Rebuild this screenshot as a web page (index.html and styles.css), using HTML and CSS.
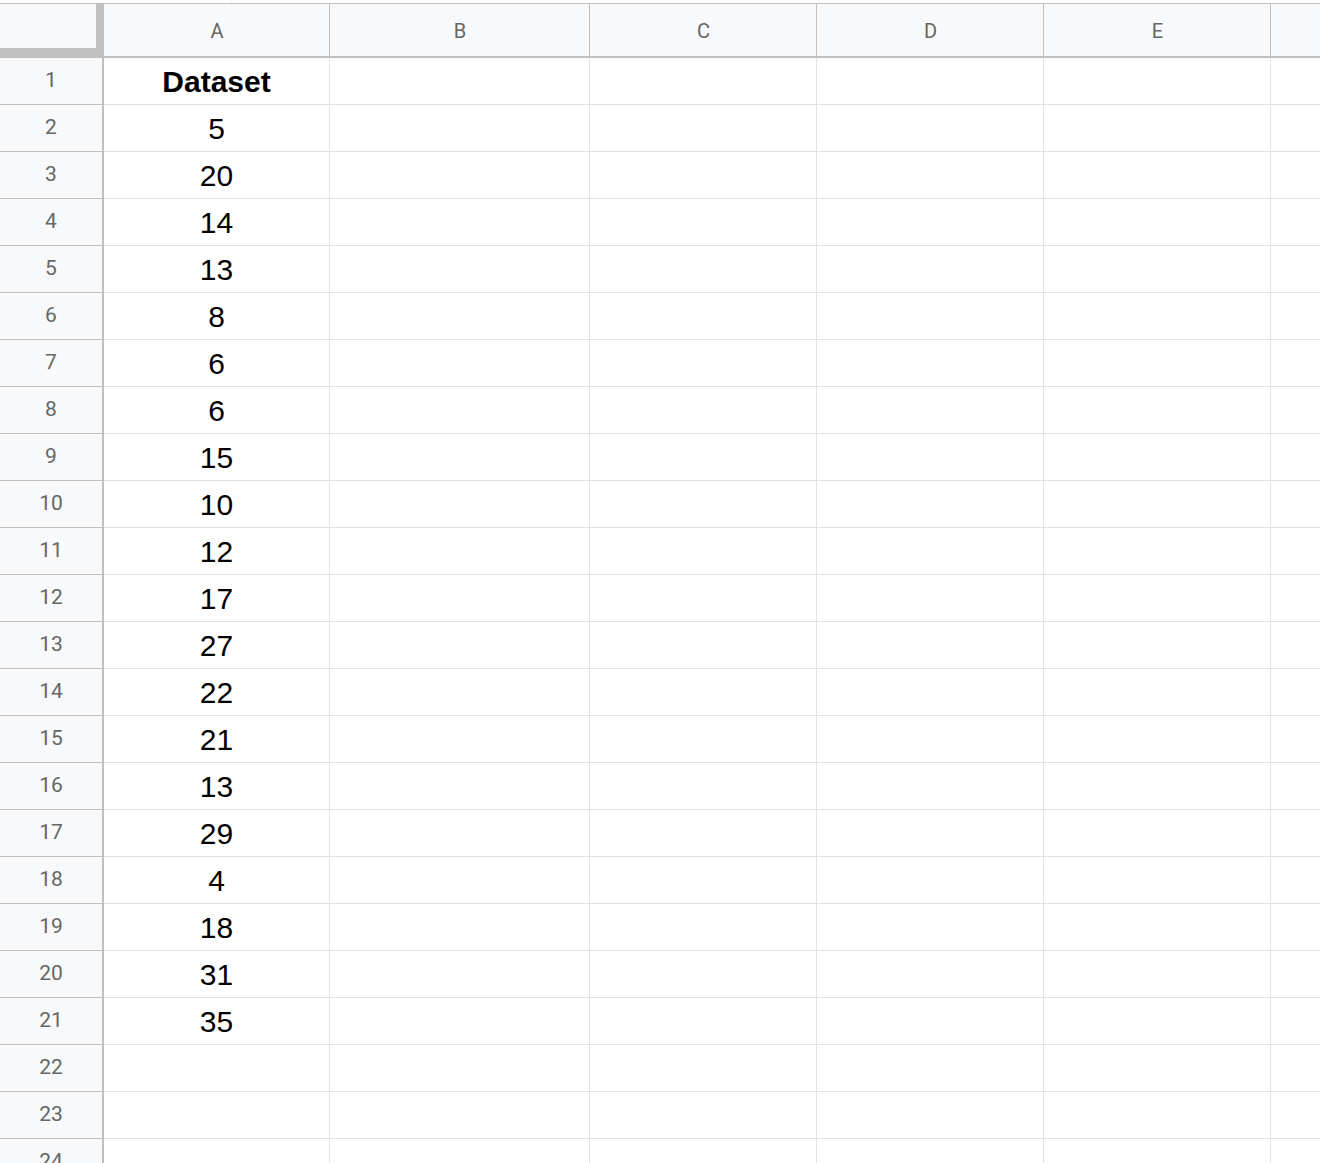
FILE: index.html
```html
<!DOCTYPE html>
<html lang="en">
<head>
<meta charset="utf-8">
<title>Dataset</title>
<link rel="stylesheet" href="styles.css">
</head>
<body>
<div class="topstrip"><span class="tick"></span></div>
<div class="sheet">
  <div class="corner"></div>
  <div class="colhead">A</div>
  <div class="colhead">B</div>
  <div class="colhead">C</div>
  <div class="colhead">D</div>
  <div class="colhead">E</div>
  <div class="colhead last"></div>

  <div class="rowhead">1</div><div class="cell bold">Dataset</div><div class="cell"></div><div class="cell"></div><div class="cell"></div><div class="cell"></div><div class="cell last"></div>
  <div class="rowhead">2</div><div class="cell">5</div><div class="cell"></div><div class="cell"></div><div class="cell"></div><div class="cell"></div><div class="cell last"></div>
  <div class="rowhead">3</div><div class="cell">20</div><div class="cell"></div><div class="cell"></div><div class="cell"></div><div class="cell"></div><div class="cell last"></div>
  <div class="rowhead">4</div><div class="cell">14</div><div class="cell"></div><div class="cell"></div><div class="cell"></div><div class="cell"></div><div class="cell last"></div>
  <div class="rowhead">5</div><div class="cell">13</div><div class="cell"></div><div class="cell"></div><div class="cell"></div><div class="cell"></div><div class="cell last"></div>
  <div class="rowhead">6</div><div class="cell">8</div><div class="cell"></div><div class="cell"></div><div class="cell"></div><div class="cell"></div><div class="cell last"></div>
  <div class="rowhead">7</div><div class="cell">6</div><div class="cell"></div><div class="cell"></div><div class="cell"></div><div class="cell"></div><div class="cell last"></div>
  <div class="rowhead">8</div><div class="cell">6</div><div class="cell"></div><div class="cell"></div><div class="cell"></div><div class="cell"></div><div class="cell last"></div>
  <div class="rowhead">9</div><div class="cell">15</div><div class="cell"></div><div class="cell"></div><div class="cell"></div><div class="cell"></div><div class="cell last"></div>
  <div class="rowhead">10</div><div class="cell">10</div><div class="cell"></div><div class="cell"></div><div class="cell"></div><div class="cell"></div><div class="cell last"></div>
  <div class="rowhead">11</div><div class="cell">12</div><div class="cell"></div><div class="cell"></div><div class="cell"></div><div class="cell"></div><div class="cell last"></div>
  <div class="rowhead">12</div><div class="cell">17</div><div class="cell"></div><div class="cell"></div><div class="cell"></div><div class="cell"></div><div class="cell last"></div>
  <div class="rowhead">13</div><div class="cell">27</div><div class="cell"></div><div class="cell"></div><div class="cell"></div><div class="cell"></div><div class="cell last"></div>
  <div class="rowhead">14</div><div class="cell">22</div><div class="cell"></div><div class="cell"></div><div class="cell"></div><div class="cell"></div><div class="cell last"></div>
  <div class="rowhead">15</div><div class="cell">21</div><div class="cell"></div><div class="cell"></div><div class="cell"></div><div class="cell"></div><div class="cell last"></div>
  <div class="rowhead">16</div><div class="cell">13</div><div class="cell"></div><div class="cell"></div><div class="cell"></div><div class="cell"></div><div class="cell last"></div>
  <div class="rowhead">17</div><div class="cell">29</div><div class="cell"></div><div class="cell"></div><div class="cell"></div><div class="cell"></div><div class="cell last"></div>
  <div class="rowhead">18</div><div class="cell">4</div><div class="cell"></div><div class="cell"></div><div class="cell"></div><div class="cell"></div><div class="cell last"></div>
  <div class="rowhead">19</div><div class="cell">18</div><div class="cell"></div><div class="cell"></div><div class="cell"></div><div class="cell"></div><div class="cell last"></div>
  <div class="rowhead">20</div><div class="cell">31</div><div class="cell"></div><div class="cell"></div><div class="cell"></div><div class="cell"></div><div class="cell last"></div>
  <div class="rowhead">21</div><div class="cell">35</div><div class="cell"></div><div class="cell"></div><div class="cell"></div><div class="cell"></div><div class="cell last"></div>
  <div class="rowhead">22</div><div class="cell"></div><div class="cell"></div><div class="cell"></div><div class="cell"></div><div class="cell"></div><div class="cell last"></div>
  <div class="rowhead">23</div><div class="cell"></div><div class="cell"></div><div class="cell"></div><div class="cell"></div><div class="cell"></div><div class="cell last"></div>
  <div class="rowhead">24</div><div class="cell"></div><div class="cell"></div><div class="cell"></div><div class="cell"></div><div class="cell"></div><div class="cell last"></div>
</div>
</body>
</html>
```

FILE: styles.css
```css
html, body {
  margin: 0;
  padding: 0;
  background: #ffffff;
}

body {
  width: 1320px;
  height: 1163px;
  overflow: hidden;
}

/* thin strip above the grid, with the edge of the toolbar divider */
.topstrip {
  height: 3px;
  padding-left: 230px;
  display: flex;
}

.tick {
  width: 1px;
  height: 3px;
  background: #e8e8e8;
}

.sheet {
  display: grid;
  grid-template-columns: 104px 226px 260px 227px 227px 227px 1fr;
  grid-template-rows: 54px;
  grid-auto-rows: 47px;
  border-top: 1px solid #c0c0c0;
}

.sheet > div {
  box-sizing: border-box;
}

/* select-all corner with the frozen-pane handles */
.corner {
  background: #f8f9fa;
  border-right: 8px solid #c0c0c0;
  border-bottom: 10px solid #c0c0c0;
}

.colhead {
  background: #f8f9fa;
  border-right: 1px solid #c0c0c0;
  border-bottom: 2px solid #c0c0c0;
  display: flex;
  align-items: center;
  justify-content: center;
  font-family: Roboto, "Liberation Sans", sans-serif;
  font-size: 20px;
  color: #666666;
  padding-top: 1px;
  padding-left: 1px;
}

.colhead.last {
  border-right: none;
}

.rowhead {
  background: #f8f9fa;
  border-right: 2px solid #c0c0c0;
  border-bottom: 1px solid #c0c0c0;
  display: flex;
  align-items: center;
  justify-content: center;
  font-family: Roboto, "Liberation Sans", sans-serif;
  font-size: 21px;
  color: #666666;
  padding-bottom: 2px;
}

.cell {
  border-right: 1px solid #e2e3e3;
  border-bottom: 1px solid #e2e3e3;
  display: flex;
  align-items: flex-end;
  justify-content: center;
  font-family: "Liberation Sans", Arial, sans-serif;
  font-size: 30px;
  line-height: 34px;
  color: #000000;
  padding-bottom: 5px;
}

.cell.last {
  border-right: none;
}

.cell.bold {
  font-weight: bold;
}
```
